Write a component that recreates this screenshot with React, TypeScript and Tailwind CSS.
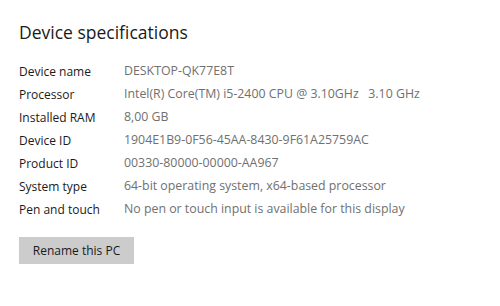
import React from 'react';

const specs: [string, string][] = [
  ['Device name', 'DESKTOP-QK77E8T'],
  ['Processor', 'Intel(R) Core(TM) i5-2400 CPU @ 3.10GHz   3.10 GHz'],
  ['Installed RAM', '8,00 GB'],
  ['Device ID', '1904E1B9-0F56-45AA-8430-9F61A25759AC'],
  ['Product ID', '00330-80000-00000-AA967'],
  ['System type', '64-bit operating system, x64-based processor'],
  ['Pen and touch', 'No pen or touch input is available for this display'],
];

const App: React.FC = () => {
  return (
    <div className="w-[500px] h-[306px] bg-white px-[19px] pt-[20px] font-['Open_Sans',sans-serif]">
      <h1 className="text-[17.5px] leading-[24px] text-[#1a1a1a]">Device specifications</h1>
      <div className="mt-[16px] flex flex-col">
        {specs.map(([label, value]) => (
          <div key={label} className="flex h-[23px] items-center text-[12px]">
            <span className="w-[105px] shrink-0 text-[#1a1a1a]">{label}</span>
            <span className="whitespace-pre text-[12.35px] text-[#707070]">{value}</span>
          </div>
        ))}
      </div>
      <button className="mt-[16px] h-[27px] w-[115px] bg-[#cccccc] text-[12px] text-[#1a1a1a]">
        Rename this PC
      </button>
    </div>
  );
};

export default App;
